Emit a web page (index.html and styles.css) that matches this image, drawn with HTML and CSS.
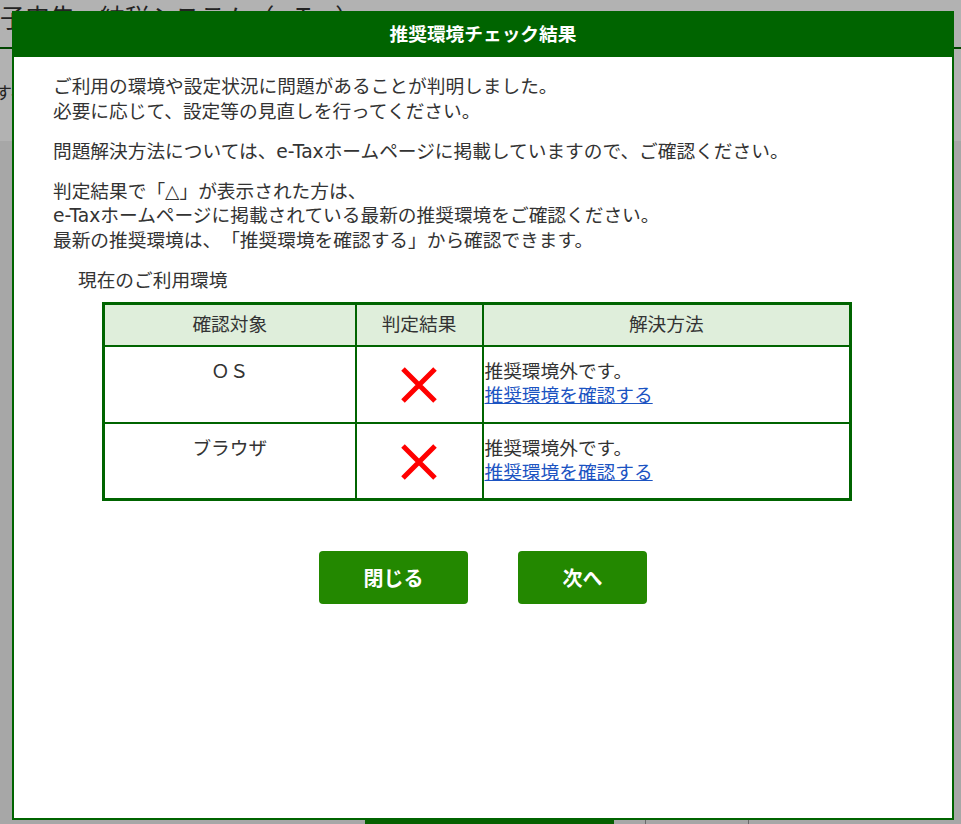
FILE: index.html
```html
<!DOCTYPE html>
<html lang="ja">

<head>
	<meta charset="utf-8">
	<title>推奨環境チェック結果</title>
	<meta name="viewport" content="width=device-width, initial-scale=1">
	<link rel="stylesheet" href="styles.css">
</head>

<body>
	<!-- page behind the dialog -->
	<div class='page'>
		<header class='site-head'>
			<p class='site-head__title'>電子申告・納税システム（e-Tax）</p>
		</header>
		<section class='notice'>
			<p>すべての項目を入力してください。</p>
		</section>
		<div class='login-actions'>
			<span class='login-actions__main'>ログイン</span>
			<span class='login-actions__sub'>クリア</span>
		</div>
	</div>

	<div class='overlay'></div>

	<!-- dialog -->
	<div class='dialog' role='dialog'>
		<h1 class='dialog__hed'>推奨環境チェック結果</h1>
		<div class='dialog__body'>
			<p>ご利用の環境や設定状況に問題があることが判明しました。<br>必要に応じて、設定等の見直しを行ってください。</p>
			<p>問題解決方法については、e-Taxホームページに掲載していますので、ご確認ください。</p>
			<p>判定結果で「△」が表示された方は、<br>e-Taxホームページに掲載されている最新の推奨環境をご確認ください。<br>最新の推奨環境は、「推奨環境を確認する」から確認できます。</p>
			<p class='env__label'>現在のご利用環境</p>

			<table class='env'>
				<thead>
					<tr>
						<th class='env__target'>確認対象</th>
						<th class='env__result'>判定結果</th>
						<th class='env__fix'>解決方法</th>
					</tr>
				</thead>
				<tbody>
					<tr>
						<td class='env__target'>ＯＳ</td>
						<td class='env__result'>
							<svg class='mark-ng' viewBox='0 0 36 36' aria-label='×'>
								<path d='M2 2 L34 34 M34 2 L2 34' />
							</svg>
						</td>
						<td class='env__fix'>推奨環境外です。<br><a href='#'>推奨環境を確認する</a></td>
					</tr>
					<tr>
						<td class='env__target'>ブラウザ</td>
						<td class='env__result'>
							<svg class='mark-ng' viewBox='0 0 36 36' aria-label='×'>
								<path d='M2 2 L34 34 M34 2 L2 34' />
							</svg>
						</td>
						<td class='env__fix'>推奨環境外です。<br><a href='#'>推奨環境を確認する</a></td>
					</tr>
				</tbody>
			</table>

			<div class='dialog__actions'>
				<button class='btn btn--close' type='button'>閉じる</button>
				<button class='btn btn--next' type='button'>次へ</button>
			</div>
		</div>
	</div>
</body>

</html>
```

FILE: styles.css
```css
/* base */

* {
	box-sizing: border-box;
}

html,
body {
	margin: 0;
	padding: 0;
	font-family: "DejaVu Sans", "Noto Sans CJK JP", sans-serif;
}

body {
	height: 824px;
	overflow: hidden;
	background-color: #f0f0f0;
	color: #333;
	text-spacing-trim: space-all;
}

p,
h1 {
	margin: 0;
}

/* page behind the dialog */

.site-head {
	display: flow-root;
	height: 49px;
	background-color: #fff;
	border-bottom: 2px solid #006400;
}

.site-head__title {
	margin-left: -25px;
	margin-top: -4px;
	font-family: "Noto Sans CJK JP", sans-serif;
	font-size: 25px;
	line-height: 40px;
	color: #333;
	white-space: nowrap;
}

.notice {
	display: flow-root;
	height: 92px;
	padding-top: 30px;
	background-color: #fff;
}

.notice p {
	margin-left: -5px;
	font-size: 17px;
}

.login-actions {
	display: flex;
	margin-top: 674px;
	padding-left: 365px;
}

.login-actions__main {
	width: 249px;
	height: 44px;
	padding-top: 4px;
	background-color: #0a8a00;
	color: #fff;
	font-size: 20px;
	text-align: center;
}

.login-actions__sub {
	width: 104px;
	height: 44px;
	margin-left: 31px;
	padding-top: 4px;
	background-color: #eee;
	border: 1px solid #999;
	font-size: 20px;
	text-align: center;
	color: #000;
}

.overlay {
	position: fixed;
	top: 0;
	right: 0;
	bottom: 0;
	left: 0;
	background-color: rgba(0, 0, 0, 0.3);
}

/* dialog */

.dialog {
	position: fixed;
	top: 11px;
	left: 12px;
	width: 942px;
	height: 809px;
	background-color: #fff;
	border: 2px solid #006400;
	border-top: 0;
}

.dialog__hed {
	height: 46px;
	margin: 0 -2px;
	background-color: #006400;
	color: #fff;
	font-size: 18.7px;
	font-weight: 700;
	line-height: 48px;
	text-align: center;
}

.dialog__body {
	padding: 18px 39px 0 39px;
	font-size: 18.7px;
	line-height: 24.5px;
}

.dialog__body p {
	margin-bottom: 15.5px;
}

.dialog__body .env__label {
	margin: 0 0 9px 25px;
}

/* environment table */

.env {
	width: 750px;
	margin-left: 49px;
	border-collapse: collapse;
	border: 3px solid #006400;
	font-size: 18.7px;
	line-height: 24.5px;
}

.env th,
.env td {
	border: 2px solid #006400;
	padding: 0;
}

.env th {
	height: 42px;
	background-color: #dfeedb;
	font-weight: 400;
	text-align: center;
}

.env td {
	height: 77px;
	vertical-align: top;
}

.env__target {
	width: 252px;
}

.env__result {
	width: 127px;
}

td.env__target {
	padding-top: 13px;
	text-align: center;
}

td.env__result {
	padding-top: 20px;
	text-align: center;
}

td.env__fix {
	padding-top: 13px;
	padding-left: 1px;
}

.env a {
	color: #1b53c2;
	text-decoration: underline;
}

.mark-ng {
	display: block;
	width: 36px;
	height: 36px;
	margin: 0 auto;
}

.mark-ng path {
	fill: none;
	stroke: #f00;
	stroke-width: 5;
}

/* buttons */

.dialog__actions {
	display: flex;
	justify-content: center;
	gap: 50px;
	margin-top: 50px;
}

.btn {
	height: 53px;
	border: 0;
	border-radius: 4px;
	background-color: #238800;
	color: #fff;
	font-family: "Noto Sans CJK JP", sans-serif;
	font-size: 20px;
	font-weight: 700;
}

.btn--close {
	width: 149px;
}

.btn--next {
	width: 129px;
}
```
